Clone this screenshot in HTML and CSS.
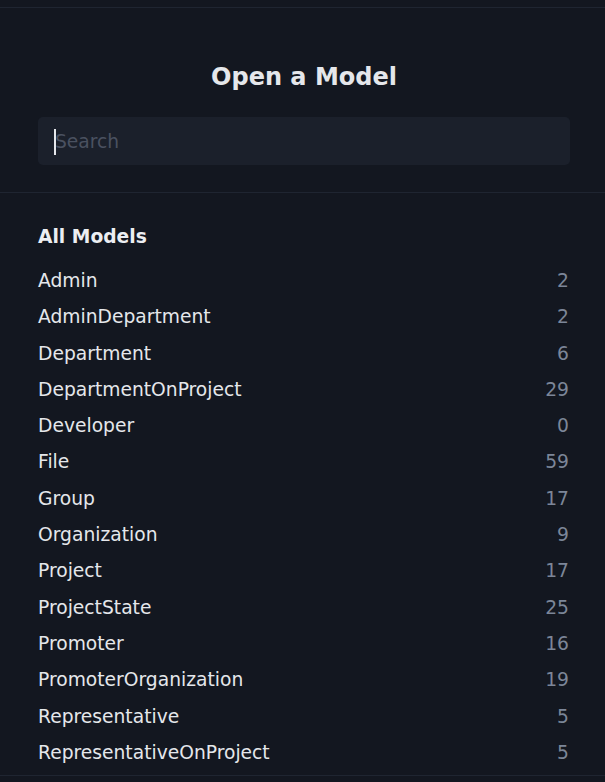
FILE: index.html
```html
<!DOCTYPE html>
<html lang="en">
<head>
<meta charset="utf-8">
<title>Open a Model</title>
<link rel="stylesheet" href="styles.css">
</head>
<body>
<div class="topbar"></div>
<section class="head">
  <h1 class="title">Open a Model</h1>
  <label class="field">
    <input class="search" type="text" placeholder="Search" autofocus>
    <span class="caret"></span>
  </label>
</section>
<section class="models">
  <h2 class="heading">All Models</h2>
  <ul class="list">
    <li class="row"><span class="name">Admin</span><span class="count">2</span></li>
    <li class="row"><span class="name">AdminDepartment</span><span class="count">2</span></li>
    <li class="row"><span class="name">Department</span><span class="count">6</span></li>
    <li class="row"><span class="name">DepartmentOnProject</span><span class="count">29</span></li>
    <li class="row"><span class="name">Developer</span><span class="count">0</span></li>
    <li class="row"><span class="name">File</span><span class="count">59</span></li>
    <li class="row"><span class="name">Group</span><span class="count">17</span></li>
    <li class="row"><span class="name">Organization</span><span class="count">9</span></li>
    <li class="row"><span class="name">Project</span><span class="count">17</span></li>
    <li class="row"><span class="name">ProjectState</span><span class="count">25</span></li>
    <li class="row"><span class="name">Promoter</span><span class="count">16</span></li>
    <li class="row"><span class="name">PromoterOrganization</span><span class="count">19</span></li>
    <li class="row"><span class="name">Representative</span><span class="count">5</span></li>
    <li class="row"><span class="name">RepresentativeOnProject</span><span class="count">5</span></li>
  </ul>
</section>
</body>
</html>
```
FILE: styles.css
```css
html, body {
  margin: 0;
  padding: 0;
  background: #131720;
  color: #e5e7eb;
  font-family: "DejaVu Sans", sans-serif;
  height: 782px;
  overflow: hidden;
}
.topbar {
  height: 7px;
  border-bottom: 1px solid #1f2531;
}
.head {
  padding: 53px 35px 27px 38px;
  border-bottom: 1px solid #1f2531;
}
.title {
  margin: 0 0 24px;
  font-size: 24px;
  line-height: 32px;
  font-weight: bold;
  text-align: center;
  color: #e5e7eb;
}
.field {
  display: block;
  position: relative;
}
.search {
  display: block;
  box-sizing: border-box;
  width: 100%;
  height: 48px;
  margin: 0;
  padding: 0 16px 0 17px;
  border: none;
  border-radius: 5px;
  background: #1b202b;
  color: #e5e7eb;
  caret-color: transparent;
  font-family: "DejaVu Sans", sans-serif;
  font-size: 18.7px;
  outline: none;
}
.search::placeholder {
  color: #4a5160;
}
.caret {
  position: absolute;
  left: 16px;
  top: 12px;
  width: 2px;
  height: 26px;
  background: #e5e7eb;
}
.models {
  padding: 30px 35px 4px 38px;
  border-bottom: 1px solid #1f2531;
}
.heading {
  margin: 0 0 12px;
  font-size: 18.7px;
  line-height: 28px;
  font-weight: bold;
  color: #eceef2;
}
.list {
  list-style: none;
  margin: 0;
  padding: 0;
}
.row {
  display: flex;
  justify-content: space-between;
  font-size: 18.7px;
  line-height: 36.3px;
}
.name {
  color: #e5e7eb;
}
.count {
  color: #7c8698;
  padding-right: 1px;
}
```
